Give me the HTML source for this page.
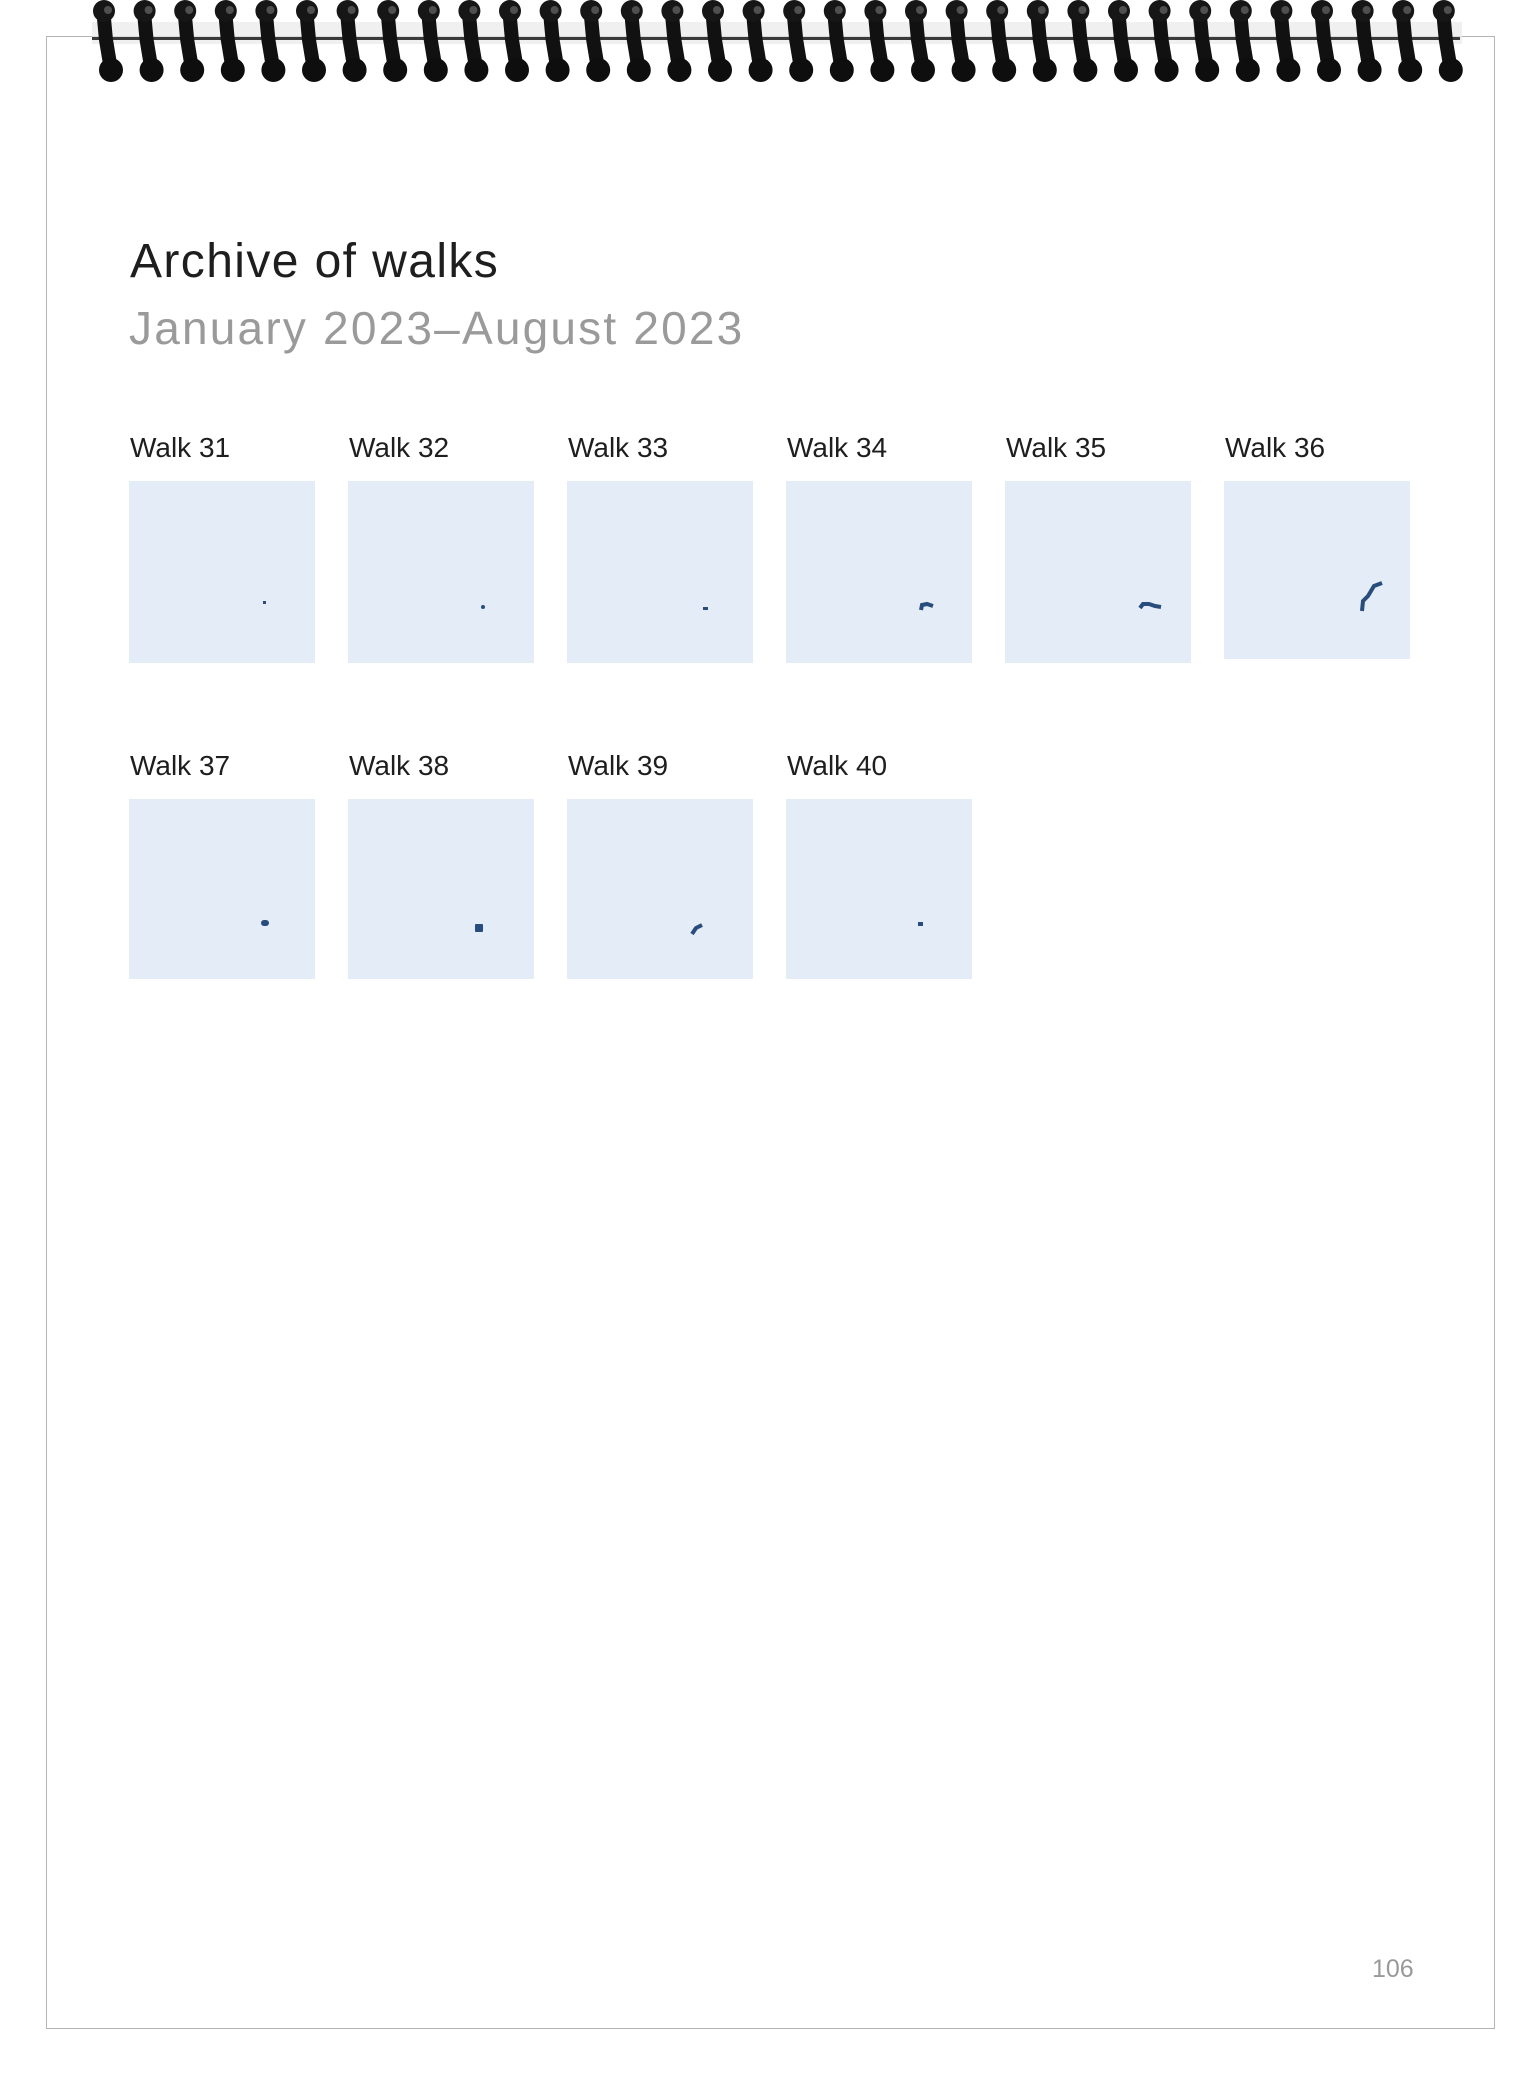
<!DOCTYPE html>
<html><head><meta charset="utf-8"><style>
html,body{margin:0;padding:0;background:#fff;}
body{width:1540px;height:2081px;position:relative;overflow:hidden;font-family:"Liberation Sans",sans-serif;}
.page{position:absolute;left:46px;top:36px;width:1449px;height:1993px;border:1px solid #b4b4b4;box-sizing:border-box;}
.t{position:absolute;white-space:nowrap;line-height:1;}
.box{position:absolute;width:186px;height:182px;background:#e4ecf7;}
.d{position:absolute;background:#284d7c;}
</style></head><body>
<div class="page"></div>
<svg style="position:absolute;left:0;top:0" width="1540" height="90">
<rect x="92" y="22" width="1370" height="22" fill="#eaeaea" opacity="0.7"/>
<rect x="92" y="37" width="1368" height="3" fill="#3a3a3a"/>
<g id="r">
<path d="M103 8 L106 40 L111 70" stroke="#111" stroke-width="14" fill="none" stroke-linecap="round"/>
<circle cx="104" cy="11" r="11" fill="#161616"/>
<circle cx="111" cy="70" r="12" fill="#0e0e0e"/>
<circle cx="108" cy="10" r="4" fill="#777" opacity="0.6"/>
</g>
<use href="#r" x="40.6"/><use href="#r" x="81.2"/><use href="#r" x="121.8"/><use href="#r" x="162.4"/><use href="#r" x="203"/><use href="#r" x="243.6"/><use href="#r" x="284.2"/><use href="#r" x="324.8"/><use href="#r" x="365.4"/><use href="#r" x="406"/><use href="#r" x="446.6"/><use href="#r" x="487.2"/><use href="#r" x="527.8"/><use href="#r" x="568.4"/><use href="#r" x="609"/><use href="#r" x="649.6"/><use href="#r" x="690.2"/><use href="#r" x="730.8"/><use href="#r" x="771.4"/><use href="#r" x="812"/><use href="#r" x="852.6"/><use href="#r" x="893.2"/><use href="#r" x="933.8"/><use href="#r" x="974.4"/><use href="#r" x="1015"/><use href="#r" x="1055.6"/><use href="#r" x="1096.2"/><use href="#r" x="1136.8"/><use href="#r" x="1177.4"/><use href="#r" x="1218"/><use href="#r" x="1258.6"/><use href="#r" x="1299.2"/><use href="#r" x="1339.8"/>
</svg>

<div class="t" style="left:130px;top:238px;font-size:48px;color:#1e1e1e;letter-spacing:1.4px;">Archive of walks</div>
<div class="t" style="left:129px;top:305px;font-size:46px;color:#9a9a9a;letter-spacing:2.2px;">January 2023–August 2023</div>

<div class="t" style="left:130px;top:434px;font-size:28px;color:#1e1e1e;">Walk 31</div>
<div class="t" style="left:349px;top:434px;font-size:28px;color:#1e1e1e;">Walk 32</div>
<div class="t" style="left:568px;top:434px;font-size:28px;color:#1e1e1e;">Walk 33</div>
<div class="t" style="left:787px;top:434px;font-size:28px;color:#1e1e1e;">Walk 34</div>
<div class="t" style="left:1006px;top:434px;font-size:28px;color:#1e1e1e;">Walk 35</div>
<div class="t" style="left:1225px;top:434px;font-size:28px;color:#1e1e1e;">Walk 36</div>

<div class="box" style="left:129px;top:481px"></div>
<div class="box" style="left:348px;top:481px"></div>
<div class="box" style="left:567px;top:481px"></div>
<div class="box" style="left:786px;top:481px"></div>
<div class="box" style="left:1005px;top:481px"></div>
<div class="box" style="left:1224px;top:481px;height:178px"></div>

<div class="d" style="left:263px;top:601px;width:3px;height:3px"></div>
<div class="d" style="left:481px;top:605px;width:4px;height:4px;border-radius:2px"></div>
<div class="d" style="left:703px;top:607px;width:5px;height:3px"></div>
<svg style="position:absolute;left:0;top:0" width="1540" height="1000">
<path d="M921 610 L922 605 L927 604 L933 606" stroke="#284d7c" stroke-width="4" fill="none"/>
<path d="M1140 608 L1143 604 L1149 604 L1155 606 L1161 607" stroke="#284d7c" stroke-width="4" fill="none"/>
<path d="M1362 611 L1363 601 L1368 596 L1374 586 L1382 583" stroke="#284d7c" stroke-width="4" fill="none"/>
</svg>

<div class="t" style="left:130px;top:752px;font-size:28px;color:#1e1e1e;">Walk 37</div>
<div class="t" style="left:349px;top:752px;font-size:28px;color:#1e1e1e;">Walk 38</div>
<div class="t" style="left:568px;top:752px;font-size:28px;color:#1e1e1e;">Walk 39</div>
<div class="t" style="left:787px;top:752px;font-size:28px;color:#1e1e1e;">Walk 40</div>

<div class="box" style="left:129px;top:799px;height:180px"></div>
<div class="box" style="left:348px;top:799px;height:180px"></div>
<div class="box" style="left:567px;top:799px;height:180px"></div>
<div class="box" style="left:786px;top:799px;height:180px"></div>

<div class="d" style="left:261px;top:920px;width:8px;height:6px;border-radius:3px"></div>
<div class="d" style="left:475px;top:924px;width:8px;height:8px;border-radius:1px"></div>
<svg style="position:absolute;left:0;top:0" width="1540" height="1000">
<path d="M692 934 L696 928 L702 925" stroke="#284d7c" stroke-width="4" fill="none"/>
</svg>
<div class="d" style="left:918px;top:922px;width:5px;height:4px"></div>

<div class="t" style="left:1372px;top:1957px;font-size:25px;color:#999;">106</div>
</body></html>
